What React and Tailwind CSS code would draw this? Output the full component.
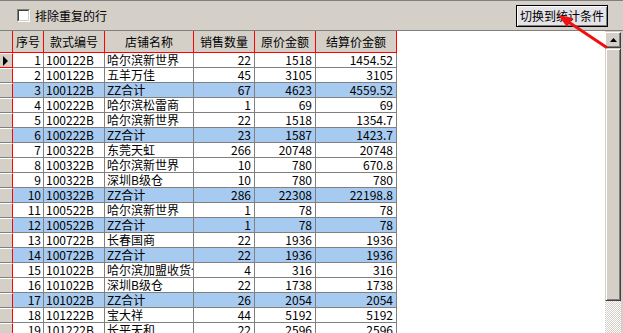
import React from "react";

const rows = [
  ["1", "100122B", "哈尔滨新世界", "22", "1518", "1454.52", false],
  ["2", "100122B", "五羊万佳", "45", "3105", "3105", false],
  ["3", "100122B", "ZZ合计", "67", "4623", "4559.52", true],
  ["4", "100222B", "哈尔滨松雷商", "1", "69", "69", false],
  ["5", "100222B", "哈尔滨新世界", "22", "1518", "1354.7", false],
  ["6", "100222B", "ZZ合计", "23", "1587", "1423.7", true],
  ["7", "100322B", "东莞天虹", "266", "20748", "20748", false],
  ["8", "100322B", "哈尔滨新世界", "10", "780", "670.8", false],
  ["9", "100322B", "深圳B级仓", "10", "780", "780", false],
  ["10", "100322B", "ZZ合计", "286", "22308", "22198.8", true],
  ["11", "100522B", "哈尔滨新世界", "1", "78", "78", false],
  ["12", "100522B", "ZZ合计", "1", "78", "78", true],
  ["13", "100722B", "长春国商", "22", "1936", "1936", false],
  ["14", "100722B", "ZZ合计", "22", "1936", "1936", true],
  ["15", "101022B", "哈尔滨加盟收货仓", "4", "316", "316", false],
  ["16", "101022B", "深圳B级仓", "22", "1738", "1738", false],
  ["17", "101022B", "ZZ合计", "26", "2054", "2054", true],
  ["18", "101222B", "宝大祥", "44", "5192", "5192", false],
  ["19", "101222B", "长平天和", "22", "2596", "2596", false],
];

// widths include the right grid line
const cols = [
  { title: "序号", w: "w-[31px]", align: "text-right pr-[2px]" },
  { title: "款式编号", w: "w-[61px]", align: "text-left pl-[2px]" },
  { title: "店铺名称", w: "w-[89px]", align: "text-left pl-[2px]" },
  { title: "销售数量", w: "w-[61px]", align: "text-right pr-[3px]" },
  { title: "原价金额", w: "w-[61px]", align: "text-right pr-[3px]" },
  { title: "结算价金额", w: "w-[81px]", align: "text-right pr-[3px]" },
];

function Header() {
  return (
    <div className="flex h-[22px] shrink-0">
      <div className="w-[13px] h-full bg-[#d4d0c8] border-r border-b border-[#ff0000]" />
      {cols.map((c) => (
        <div
          key={c.title}
          className={`${c.w} h-full bg-[#d4d0c8] border-r border-b border-[#ff0000] flex items-center justify-center leading-[14px]`}
        >
          {c.title}
        </div>
      ))}
    </div>
  );
}

function Row({ data, index }) {
  const total = data[6];
  const current = index === 0;
  return (
    <div className="flex h-[15px] shrink-0">
      <div
        className={`w-[13px] h-full bg-[#d4d0c8] border-t border-t-white border-r border-r-[#ff0000] border-b flex items-center pl-[3px] ${
          current ? "border-b-[#ff0000]" : "border-b-[#808080]"
        }`}
      >
        {current && (
          <svg width="6" height="10" viewBox="0 0 6 10">
            <path d="M0 0 L5 5 L0 10 Z" fill="#000" />
          </svg>
        )}
      </div>
      {cols.map((c, i) => (
        <div
          key={c.title}
          className={`${c.w} ${c.align} h-full border-r border-b border-[#808080] overflow-hidden whitespace-nowrap leading-[14px] ${
            total ? "bg-[#a6caf0]" : "bg-white"
          }`}
        >
          {data[i]}
        </div>
      ))}
    </div>
  );
}

function Scrollbar() {
  return (
    <div className="w-[16px] h-full flex flex-col pt-[1px] bg-[#d4d0c8]">
      <div className="h-[16px] shrink-0 bg-[#d4d0c8] border-t border-l border-t-white border-l-white border-r border-b border-r-[#404040] border-b-[#404040] shadow-[inset_-1px_-1px_0_#808080] flex items-center justify-center">
        <svg width="7" height="4" viewBox="0 0 7 4">
          <path d="M3.5 0 L7 4 L0 4 Z" fill="#000" />
        </svg>
      </div>
      <div className="h-[253px] shrink-0 bg-[#d4d0c8] border-t border-l border-t-[#d4d0c8] border-l-[#d4d0c8] border-r border-b border-r-[#404040] border-b-[#404040] shadow-[inset_1px_1px_0_#ffffff,inset_-1px_-1px_0_#808080]" />
      <div className="flex-1 bg-[image:repeating-conic-gradient(#d4d0c8_0_25%,#ffffff_0_50%)] bg-size-[2px_2px]" />
    </div>
  );
}

export default function App() {
  return (
    <div className="relative w-[623px] h-[333px] overflow-hidden bg-[#d4d0c8] text-[12px] text-black font-['Noto_Sans_CJK_SC','Liberation_Sans',sans-serif] flex flex-col">
      <div className="h-[31px] shrink-0 border-t border-t-[#808080] border-b border-b-[#808080] flex items-center justify-between pl-[17px] pr-[15px]">
        <label className="flex items-center gap-[5px]">
          <span className="w-[13px] h-[13px] border border-[#808080] border-r-white border-b-white">
            <span className="block w-full h-full bg-white border border-[#404040] border-r-[#d4d0c8] border-b-[#d4d0c8]" />
          </span>
          <span className="leading-[14px]">排除重复的行</span>
        </label>
        <button className="w-[92px] h-[22px] border border-black bg-[#e4e3e7] shadow-[inset_1px_1px_0_#ffffff,inset_-1px_-1px_0_#808080] flex items-center justify-center leading-[14px]">
          切换到统计条件
        </button>
      </div>
      <div className="flex-1 flex min-h-0">
        <div className="flex-1 bg-white flex flex-col overflow-hidden">
          <Header />
          {rows.map((r, i) => (
            <Row key={r[0]} data={r} index={i} />
          ))}
        </div>
        <Scrollbar />
        <div className="w-[2px] bg-[#d4d0c8]" />
      </div>
      <svg
        className="absolute left-0 top-0 pointer-events-none"
        width="623"
        height="333"
        viewBox="0 0 623 333"
      >
        <line x1="606" y1="47" x2="567" y2="21" stroke="#f01010" strokeWidth="3" strokeLinecap="round" />
        <polygon points="558,15 573,18 567,27" fill="#f01010" />
      </svg>
    </div>
  );
}
